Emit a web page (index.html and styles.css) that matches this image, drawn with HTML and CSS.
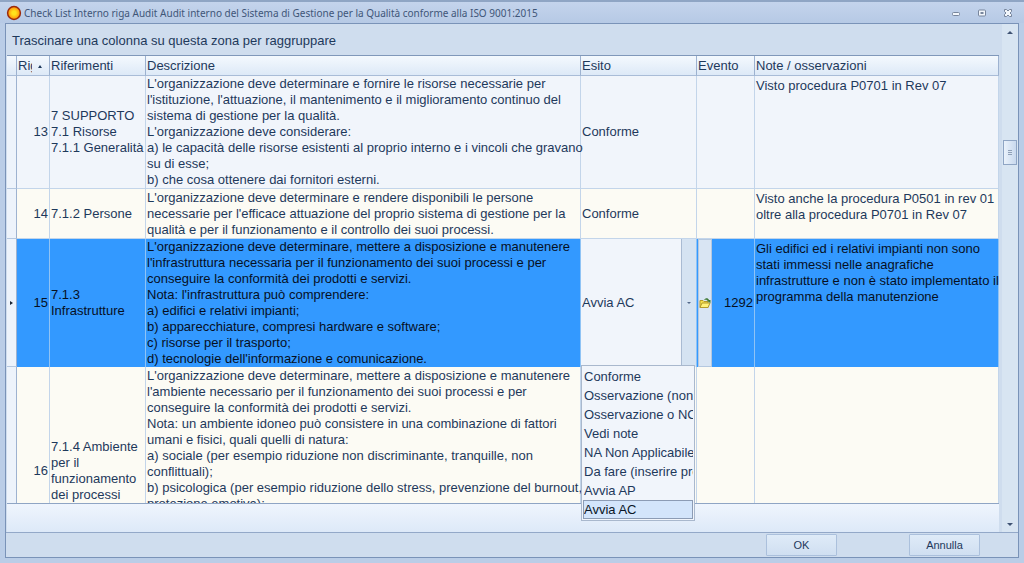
FILE: index.html
```html
<!DOCTYPE html>
<html lang="it">
<head>
<meta charset="utf-8">
<title>Check List Interno</title>
<link rel="stylesheet" href="styles.css">
</head>
<body>
<div class="window">
  <header class="titlebar">
    <svg class="app-icon" viewBox="0 0 16 16" aria-hidden="true">
      <defs><radialGradient id="sun"><stop offset="0.3" stop-color="#ffe21c"/><stop offset="1" stop-color="#ff8a08"/></radialGradient></defs>
      <circle cx="8" cy="8" r="6.4" fill="url(#sun)" stroke="#9b2a0c" stroke-width="1.5"/>
    </svg>
    <h1 class="title">Check List Interno riga Audit Audit interno del Sistema di Gestione per la Qualità conforme alla ISO 9001:2015</h1>
    <div class="window-buttons">
      <button type="button" class="window-button" aria-label="Riduci a icona"><svg viewBox="0 0 10 10"><rect x="1.5" y="4.5" width="7" height="3" rx="1" fill="#f2f6fb" stroke="#77859c"/></svg></button>
      <button type="button" class="window-button" aria-label="Ingrandisci"><svg viewBox="0 0 10 10"><rect x="1.5" y="2" width="7" height="6" rx="1" fill="#f2f6fb" stroke="#77859c"/><rect x="3.5" y="4" width="3" height="2" fill="#77859c"/></svg></button>
      <button type="button" class="window-button" aria-label="Chiudi"><svg viewBox="0 0 10 10"><path d="M1.5 1.5h2L5 3l1.500-1.500h2v2L7 5l1.500 1.500v2h-2L5 7 3.500 8.500h-2v-2L3 5 1.500 3.500z" fill="#f2f6fb" stroke="#77859c"/></svg></button>
    </div>
  </header>
  <main class="client">
    <div class="content">
      <div class="grid">
        <div class="group-bar">Trascinare una colonna su questa zona per raggruppare</div>
        <div class="grid-view">
          <div class="grid-body">
            <table class="table">
              <colgroup>
                <col class="col-mark"><col class="col-row"><col class="col-ref"><col><col class="col-result"><col class="col-event"><col class="col-notes">
              </colgroup>
              <thead>
                <tr><th></th><th><span class="sorted"><span class="sorted-label">Riga</span><span class="sort-arrow"></span></span></th><th>Riferimenti</th><th>Descrizione</th><th>Esito</th><th>Evento</th><th>Note / osservazioni</th></tr>
              </thead>
              <tbody>
                <tr>
                  <td class="mark"></td><td class="number">13</td><td>7 SUPPORTO<br>7.1 Risorse<br>7.1.1 Generalità</td>
                  <td>L'organizzazione deve determinare e fornire le risorse necessarie per<br>l'istituzione, l'attuazione, il mantenimento e il miglioramento continuo del<br>sistema di gestione per la qualità.<br>L'organizzazione deve considerare:<br>a) le capacità delle risorse esistenti al proprio interno e i vincoli che gravano<br>su di esse;<br>b) che cosa ottenere dai fornitori esterni.</td>
                  <td>Conforme</td><td></td><td class="notes">Visto procedura P0701 in Rev 07</td>
                </tr>
                <tr class="alt">
                  <td class="mark"></td><td class="number">14</td><td>7.1.2 Persone</td>
                  <td>L'organizzazione deve determinare e rendere disponibili le persone<br>necessarie per l'efficace attuazione del proprio sistema di gestione per la<br>qualità e per il funzionamento e il controllo dei suoi processi.</td>
                  <td>Conforme</td><td></td><td class="notes">Visto anche la procedura P0501 in rev 01<br>oltre alla procedura P0701 in Rev 07</td>
                </tr>
                <tr class="selected">
                  <td class="mark"><span class="row-arrow"></span></td><td class="number">15</td><td>7.1.3<br>Infrastrutture</td>
                  <td>L'organizzazione deve determinare, mettere a disposizione e manutenere<br>l'infrastruttura necessaria per il funzionamento dei suoi processi e per<br>conseguire la conformità dei prodotti e servizi.<br>Nota: l'infrastruttura può comprendere:<br>a) edifici e relativi impianti;<br>b) apparecchiature, compresi hardware e software;<br>c) risorse per il trasporto;<br>d) tecnologie dell'informazione e comunicazione.</td>
                  <td class="editor"><div class="combo"><select class="combo-select" aria-label="Esito"><option>Avvia AC</option></select><span class="combo-drop"></span></div></td>
                  <td class="editor"><div class="event">
                    <button type="button" class="event-button" aria-label="Apri evento"><svg viewBox="0 0 12 12"><path d="M1 10.500V3.500h3l1 1h4v6z" fill="#f6e04a" stroke="#b39a2c"/><path d="M1 10.500l2-4.500h8L9 10.500z" fill="#fff27a" stroke="#b39a2c"/><path d="M5 3c1.500-2.500 4-2.500 5 0h1.500v3L7.500 3.500H9C8 2.500 7 2.500 5 3z" fill="#3f7a35"/></svg></button>
                    <span class="event-number">1292</span>
                  </div></td>
                  <td class="notes">Gli edifici ed i relativi impianti non sono<br>stati immessi nelle anagrafiche<br>infrastrutture e non è stato implementato il<br>programma della manutenzione</td>
                </tr>
                <tr class="alt tall">
                  <td class="mark"></td><td class="number">16</td><td>7.1.4 Ambiente<br>per il<br>funzionamento<br>dei processi</td>
                  <td class="clipped">L'organizzazione deve determinare, mettere a disposizione e manutenere<br>l'ambiente necessario per il funzionamento dei suoi processi e per<br>conseguire la conformità dei prodotti e servizi.<br>Nota: un ambiente idoneo può consistere in una combinazione di fattori<br>umani e fisici, quali quelli di natura:<br>a) sociale (per esempio riduzione non discriminante, tranquille, non<br>conflittuali);<br>b) psicologica (per esempio riduzione dello stress, prevenzione del burnout,<br>protezione emotiva);</td>
                  <td></td><td></td><td></td>
                </tr>
              </tbody>
            </table>
          </div>
          <div class="grid-footer"></div>
          <ul class="options" role="listbox" aria-label="Esito">
            <li class="option" role="option">Conforme</li>
            <li class="option" role="option">Osservazione (non</li>
            <li class="option" role="option">Osservazione o NC</li>
            <li class="option" role="option">Vedi note</li>
            <li class="option" role="option">NA Non Applicabile</li>
            <li class="option" role="option">Da fare (inserire prova)</li>
            <li class="option" role="option">Avvia AP</li>
            <li class="option current" role="option" aria-selected="true">Avvia AC</li>
          </ul>
        </div>
      </div>
      <div class="scrollbar">
        <span class="scroll-up"></span>
        <div class="scroll-track"><div class="scroll-thumb"></div></div>
        <span class="scroll-down"></span>
      </div>
    </div>
    <footer class="actions">
      <button type="button" class="action">OK</button>
      <button type="button" class="action">Annulla</button>
    </footer>
  </main>
</div>
</body>
</html>
```
FILE: styles.css
```css
* { box-sizing: border-box; }

body {
  margin: 0;
  font: 13px/16px "Liberation Sans", Arial, sans-serif;
  color: #1e395b;
}

.window {
  display: flex;
  flex-direction: column;
  height: 100vh;
  padding: 0 5px 5px;
  background: #bacde7;
  border-top: 2px solid #8fa5c4;
}

.titlebar {
  display: flex;
  align-items: center;
  height: 21px;
  gap: 2px;
  margin: 0 -5px;
  padding: 1px 8px 0 6px;
  background: linear-gradient(#c4d4ec, #b6c9e5);
}

.app-icon { width: 16px; height: 16px; }

.title {
  flex: 1;
  margin: 0;
  font: 10px/16px "Noto Sans", "Open Sans", sans-serif;
  color: #3f5678;
  white-space: nowrap;
}

.window-buttons { display: flex; gap: 10px; }

.window-button {
  width: 16px;
  height: 16px;
  padding: 3px;
  border: 0;
  background: none;
}

.window-button svg { display: block; width: 10px; height: 10px; }

.client {
  flex: 1;
  min-height: 0;
  display: flex;
  flex-direction: column;
  border: 1px solid #7a93b8;
  background: #cfddee;
}

.content { flex: 1; min-height: 0; display: flex; }

.grid {
  flex: 1;
  min-width: 0;
  display: flex;
  flex-direction: column;
  padding-left: 1px;
}

.group-bar { height: 31px; padding: 9px 5px 0; }

.grid-view {
  position: relative;
  flex: 1;
  min-height: 0;
  display: flex;
  flex-direction: column;
  border-top: 1px solid #8098ba;
  margin-right: 3px;
}

.grid-body { flex: 1; min-height: 0; overflow: hidden; background: #f1f5fb; }

.table {
  width: 100%;
  table-layout: fixed;
  border-collapse: separate;
  border-spacing: 0;
}

.col-mark { width: 10px; }
.col-row { width: 33px; }
.col-ref { width: 96px; }
.col-result { width: 116px; }
.col-event { width: 58px; }
.col-notes { width: 244px; }

.table th {
  height: 20px;
  padding: 1px 1px 0;
  font-weight: normal;
  text-align: left;
  white-space: nowrap;
  overflow: hidden;
  background: linear-gradient(#f4f9fe, #dde9f7);
  border-right: 1px solid #9db2d0;
  border-bottom: 1px solid #a9bcd7;
}

.sorted { display: flex; align-items: center; gap: 6px; }
.sorted-label { width: 14px; overflow: hidden; }

.sort-arrow {
  border: 2px solid transparent;
  border-top: 0;
  border-bottom: 3px solid #1e395b;
}

.table td {
  padding: 0 1px;
  vertical-align: middle;
  white-space: nowrap;
  background: #f1f5fb;
  border-right: 1px solid #c3d5ea;
  border-bottom: 1px solid #c3d5ea;
}

.table .alt td { height: 50px; background: #fcfbf4; }
.table .tall td { height: 209px; }
.table .notes { vertical-align: top; padding-top: 2px; }
.table .clipped { vertical-align: top; padding-top: 1px; }

.table .selected td {
  color: #06101f;
  background: #3399ff;
  border-right-color: #8fc3f5;
  border-bottom: 0;
}

.table td.mark,
.table .alt td.mark,
.table .selected td.mark {
  padding: 0 3px;
  background: #edf3fb;
  border-right: 1px solid #9db2d0;
  border-bottom: 1px solid #b4c7e0;
}

.table .number { text-align: right; }

.row-arrow {
  display: block;
  width: 3px;
  border: 2px solid transparent;
  border-left: 3px solid #1a2433;
  border-right: 0;
}

.table .selected .editor { height: 128px; padding: 0; }

.combo { display: flex; height: 128px; color: #1e395b; background: #f1f5fb; }

.combo-select {
  flex: 1;
  min-width: 0;
  padding: 0 1px;
  border: 0;
  appearance: none;
  font: inherit;
  color: inherit;
  background: none;
}

.combo-drop {
  display: flex;
  align-items: center;
  justify-content: center;
  width: 15px;
  background: #d5e3f2;
  border-left: 1px solid #a9bbd3;
}

.combo-drop::after {
  content: "";
  border: 2px solid transparent;
  border-top-color: #53698a;
  border-bottom: 0;
}

.event { display: flex; align-items: center; height: 128px; padding: 0 1px; }

.event-button {
  width: 14px;
  height: 128px;
  padding: 0;
  border: 1px solid #b5c8df;
  background: #d9e5f3;
}

.event-button svg { display: block; width: 12px; height: 12px; }
.event-number { flex: 1; text-align: right; }

.grid-footer {
  height: 29px;
  background: linear-gradient(#eff5fd, #dde9f8);
  border-top: 1px solid #8fa5c4;
}

.options {
  position: absolute;
  top: 309px;
  right: 304px;
  width: 114px;
  margin: 0;
  padding: 1px;
  list-style: none;
  background: #f1f5fb;
  border: 1px solid #a9b8cd;
}

.option {
  height: 19px;
  padding: 2px 0 0 1px;
  overflow: hidden;
  white-space: nowrap;
}

.current {
  padding: 1px 0 0;
  color: #0a1626;
  background: #d3e5fb;
  border: 1px solid #8c9cb5;
}

.scrollbar {
  display: flex;
  flex-direction: column;
  align-items: center;
  width: 16px;
  padding: 7px 0 6px;
  background: #d8e5f2;
}

.scroll-up { border: 3px solid transparent; border-top: 0; border-bottom-color: #3f5373; }
.scroll-down { border: 3px solid transparent; border-bottom: 0; border-top-color: #3f5373; }
.scroll-track { flex: 1; padding-top: 106px; }

.scroll-thumb {
  display: flex;
  align-items: center;
  justify-content: center;
  width: 14px;
  height: 25px;
  background: linear-gradient(90deg, #eaf2fb, #c9d9ee);
  border: 1px solid #8fa5c4;
}

.scroll-thumb::after {
  content: "";
  width: 4px;
  height: 5px;
  background: repeating-linear-gradient(#8fa0b8 0 1px, #dbe6f3 1px 2px);
}

.actions {
  display: flex;
  justify-content: flex-end;
  align-items: center;
  gap: 72px;
  height: 25px;
  padding-right: 38px;
  border-top: 1px solid #93a8c8;
}

.action {
  width: 71px;
  height: 22px;
  padding: 0;
  font: 11px/16px "Liberation Sans", Arial, sans-serif;
  color: #1e395b;
  background: linear-gradient(#dfebf8, #d0dff1);
  border: 1px solid #abc0dc;
  border-radius: 1px;
}
```
